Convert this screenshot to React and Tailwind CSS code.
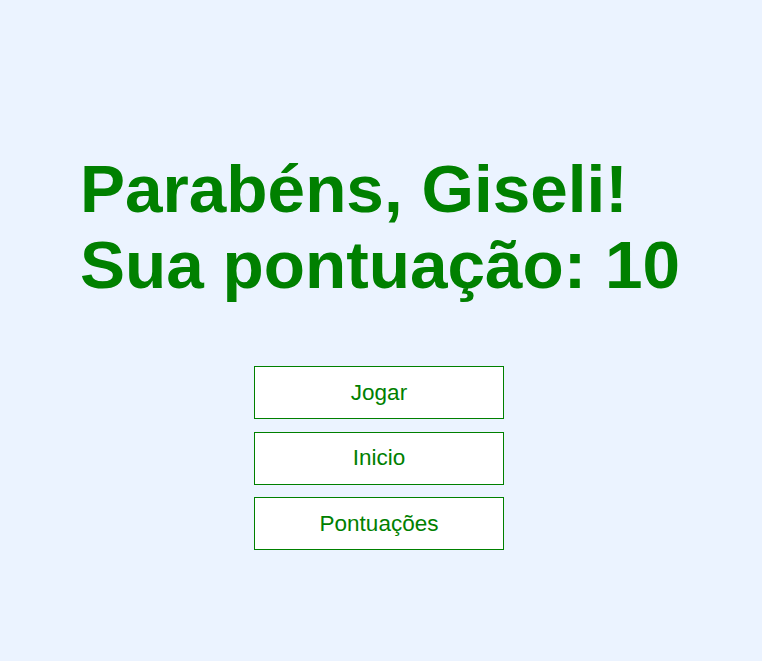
export default function App() {
  const btn =
    "w-[250px] h-[53px] bg-white border border-[#008000] text-[#008000] text-[22.5px] flex items-center justify-center";
  return (
    <div
      className="w-[762px] h-[661px] bg-[#ebf3ff] overflow-hidden"
      style={{ fontFamily: '"Liberation Sans", Arial, sans-serif' }}
    >
      <div className="pt-[151px] pl-[80px]">
        <h1 className="text-[67.5px] leading-[76px] font-bold text-[#008000] whitespace-nowrap">
          Parabéns, Giseli!
          <br />
          Sua pontuação: 10
        </h1>
      </div>
      <div className="mt-[63px] pl-[254px] flex flex-col gap-[12.5px]">
        <button className={btn}>Jogar</button>
        <button className={btn}>Inicio</button>
        <button className={btn}>Pontuações</button>
      </div>
    </div>
  );
}
